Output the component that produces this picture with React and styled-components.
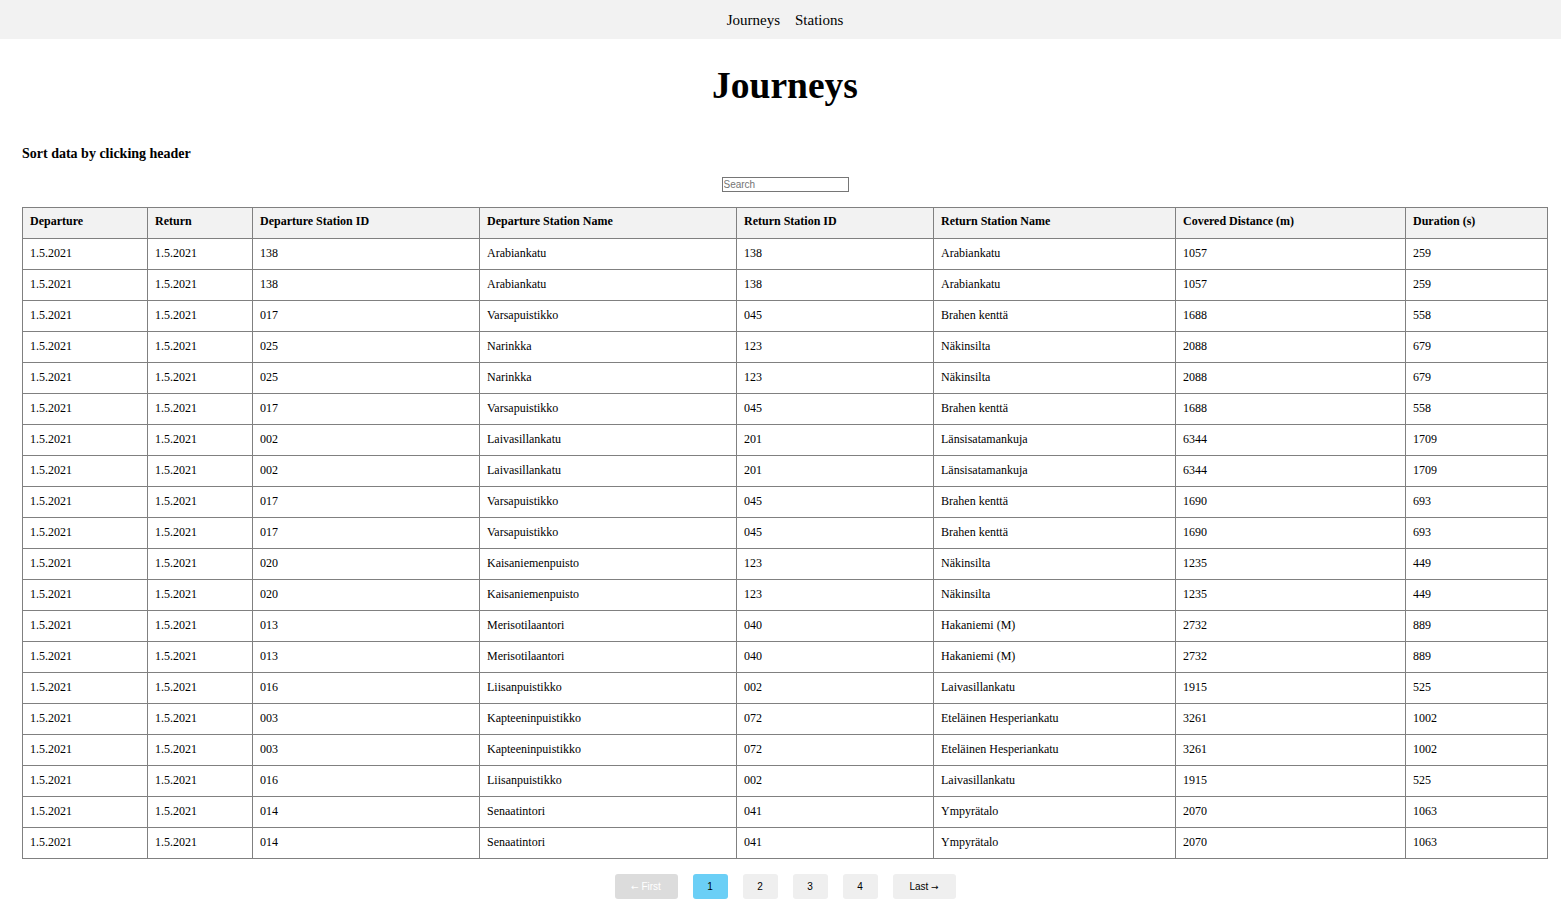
import React from "react";
import styled, { createGlobalStyle } from "styled-components";

const Global = createGlobalStyle`
  html, body { margin: 0; padding: 0; background: #fff; }
  body { font-family: "Liberation Serif", "Times New Roman", serif; color: #000; }
`;

const Nav = styled.nav`
  background: #f2f2f2;
  height: 39px;
  display: flex;
  align-items: center;
  justify-content: center;
  gap: 15px;
  padding: 2px 13px 0 22px;
  box-sizing: border-box;
`;

const NavLink = styled.a`
  font-size: 15px;
  color: #000;
  text-decoration: none;
  cursor: pointer;
`;

const Page = styled.main`
  padding: 0 13px 20px 22px;
  display: flex;
  flex-direction: column;
`;

const Title = styled.h1`
  font-size: 37.5px;
  font-weight: bold;
  text-align: center;
  margin: 25px 0 0;
  line-height: 44px;
`;

const Hint = styled.h4`
  font-size: 14px;
  font-weight: bold;
  margin: 37px 0 0;
  line-height: 18px;
`;

const SearchRow = styled.div`
  display: flex;
  justify-content: center;
  margin-top: 14px;
`;

const SearchInput = styled.input`
  width: 127px;
  height: 15px;
  box-sizing: border-box;
  border: 1px solid #767676;
  padding: 0 1px;
  font-family: "Liberation Sans", Arial, sans-serif;
  font-size: 10px;
  &::placeholder { color: #757575; }
`;

const Table = styled.table`
  margin-top: 15px;
  width: 1525px;
  border-collapse: collapse;
  table-layout: fixed;
  font-size: 12px;
`;

const Th = styled.th`
  background: #f2f2f2;
  border: 1px solid #808080;
  text-align: left;
  font-weight: bold;
  height: 31px;
  padding: 0 7px 3px;
  box-sizing: border-box;
  cursor: pointer;
`;

const Td = styled.td`
  border: 1px solid #808080;
  height: 31px;
  padding: 0 7px 2px;
  box-sizing: border-box;
`;

const Pager = styled.div`
  display: flex;
  justify-content: center;
  gap: 15px;
  margin-top: 15px;
`;

const PageButton = styled.button`
  height: 25px;
  min-width: ${(p) => (p.$wide ? "63px" : "35px")};
  padding: 0 10px;
  border: none;
  border-radius: 3px;
  font-family: "Liberation Sans", Arial, sans-serif;
  font-size: 10px;
  color: ${(p) => (p.$disabled ? "#fff" : "#000")};
  background: ${(p) => (p.$active ? "#6bcff6" : p.$disabled ? "#dcdcdc" : "#efefef")};
  cursor: pointer;
`;

const Arrow = styled.span`
  font-family: "DejaVu Sans", sans-serif;
  font-size: 9px;
`;

const widths = [125, 105, 227, 257, 197, 242, 230, 142];
const headers = [
  "Departure",
  "Return",
  "Departure Station ID",
  "Departure Station Name",
  "Return Station ID",
  "Return Station Name",
  "Covered Distance (m)",
  "Duration (s)",
];

const rows = [
  ["138", "Arabiankatu", "138", "Arabiankatu", "1057", "259"],
  ["138", "Arabiankatu", "138", "Arabiankatu", "1057", "259"],
  ["017", "Varsapuistikko", "045", "Brahen kenttä", "1688", "558"],
  ["025", "Narinkka", "123", "Näkinsilta", "2088", "679"],
  ["025", "Narinkka", "123", "Näkinsilta", "2088", "679"],
  ["017", "Varsapuistikko", "045", "Brahen kenttä", "1688", "558"],
  ["002", "Laivasillankatu", "201", "Länsisatamankuja", "6344", "1709"],
  ["002", "Laivasillankatu", "201", "Länsisatamankuja", "6344", "1709"],
  ["017", "Varsapuistikko", "045", "Brahen kenttä", "1690", "693"],
  ["017", "Varsapuistikko", "045", "Brahen kenttä", "1690", "693"],
  ["020", "Kaisaniemenpuisto", "123", "Näkinsilta", "1235", "449"],
  ["020", "Kaisaniemenpuisto", "123", "Näkinsilta", "1235", "449"],
  ["013", "Merisotilaantori", "040", "Hakaniemi (M)", "2732", "889"],
  ["013", "Merisotilaantori", "040", "Hakaniemi (M)", "2732", "889"],
  ["016", "Liisanpuistikko", "002", "Laivasillankatu", "1915", "525"],
  ["003", "Kapteeninpuistikko", "072", "Eteläinen Hesperiankatu", "3261", "1002"],
  ["003", "Kapteeninpuistikko", "072", "Eteläinen Hesperiankatu", "3261", "1002"],
  ["016", "Liisanpuistikko", "002", "Laivasillankatu", "1915", "525"],
  ["014", "Senaatintori", "041", "Ympyrätalo", "2070", "1063"],
  ["014", "Senaatintori", "041", "Ympyrätalo", "2070", "1063"],
];

export default function App() {
  return (
    <>
      <Global />
      <Nav>
        <NavLink>Journeys</NavLink>
        <NavLink>Stations</NavLink>
      </Nav>
      <Page>
        <Title>Journeys</Title>
        <Hint>Sort data by clicking header</Hint>
        <SearchRow>
          <SearchInput placeholder="Search" />
        </SearchRow>
        <Table>
          <colgroup>
            {widths.map((w, i) => (
              <col key={i} style={{ width: w }} />
            ))}
          </colgroup>
          <thead>
            <tr>
              {headers.map((h) => (
                <Th key={h}>{h}</Th>
              ))}
            </tr>
          </thead>
          <tbody>
            {rows.map((r, i) => (
              <tr key={i}>
                <Td>1.5.2021</Td>
                <Td>1.5.2021</Td>
                {r.map((c, j) => (
                  <Td key={j}>{c}</Td>
                ))}
              </tr>
            ))}
          </tbody>
        </Table>
        <Pager>
          <PageButton $wide $disabled><Arrow>←</Arrow> First</PageButton>
          <PageButton $active>1</PageButton>
          <PageButton>2</PageButton>
          <PageButton>3</PageButton>
          <PageButton>4</PageButton>
          <PageButton $wide>Last <Arrow>→</Arrow></PageButton>
        </Pager>
      </Page>
    </>
  );
}
